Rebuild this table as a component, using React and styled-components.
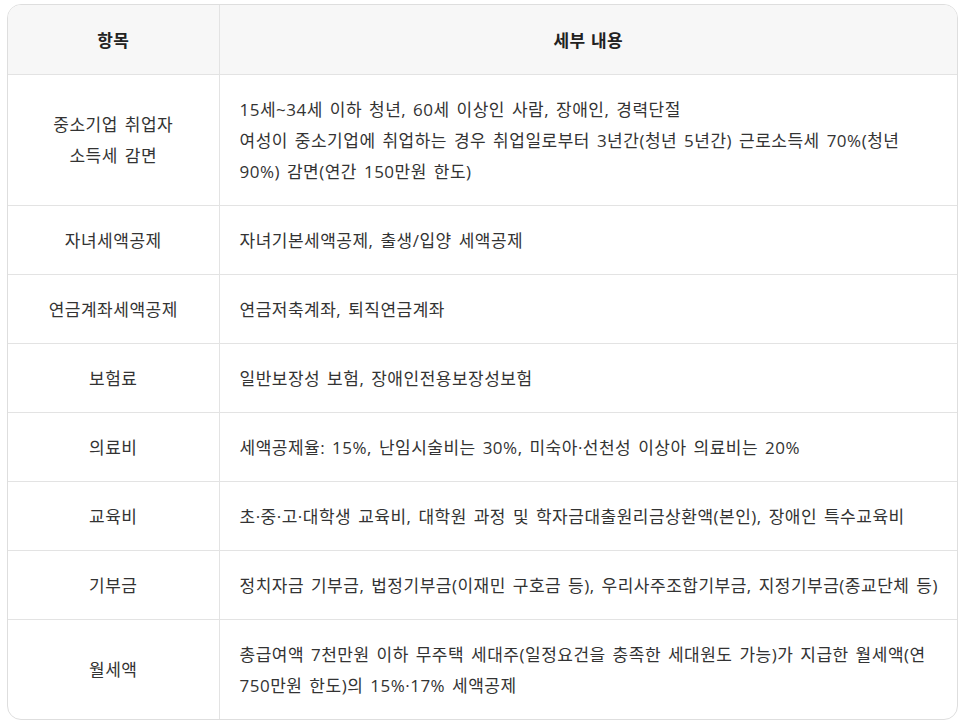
import styled, { createGlobalStyle } from "styled-components";

const GlobalStyle = createGlobalStyle`
    body {
        margin: 0;
        background: #FFFFFF;
        font-family: "Open Sans", "Noto Sans CJK KR", sans-serif;
    }
`;

const rows = [
    {
        item: ["중소기업 취업자", "소득세 감면"],
        detail: [
            "15세~34세 이하 청년, 60세 이상인 사람, 장애인, 경력단절",
            "여성이 중소기업에 취업하는 경우 취업일로부터 3년간(청년 5년간) 근로소득세 70%(청년",
            "90%) 감면(연간 150만원 한도)",
        ],
    },
    { item: ["자녀세액공제"], detail: ["자녀기본세액공제, 출생/입양 세액공제"] },
    { item: ["연금계좌세액공제"], detail: ["연금저축계좌, 퇴직연금계좌"] },
    { item: ["보험료"], detail: ["일반보장성 보험, 장애인전용보장성보험"] },
    { item: ["의료비"], detail: ["세액공제율: 15%, 난임시술비는 30%, 미숙아·선천성 이상아 의료비는 20%"] },
    { item: ["교육비"], detail: ["초·중·고·대학생 교육비, 대학원 과정 및 학자금대출원리금상환액(본인), 장애인 특수교육비"] },
    { item: ["기부금"], detail: ["정치자금 기부금, 법정기부금(이재민 구호금 등), 우리사주조합기부금, 지정기부금(종교단체 등)"] },
    {
        item: ["월세액"],
        detail: [
            "총급여액 7천만원 이하 무주택 세대주(일정요건을 충족한 세대원도 가능)가 지급한 월세액(연",
            "750만원 한도)의 15%·17% 세액공제",
        ],
    },
];

function App() {
    return (
        <>
            <GlobalStyle />
            <Wrapper>
                <Tabela>
                    <colgroup>
                        <col style={{ width: "211px" }} />
                        <col />
                    </colgroup>
                    <thead>
                        <tr>
                            <Th>항목</Th>
                            <Th>세부 내용</Th>
                        </tr>
                    </thead>
                    <tbody>
                        {rows.map((r, i) => (
                            <Linha key={i}>
                                <Td $center>
                                    {r.item.map((t, j) => (
                                        <Texto key={j}>{t}</Texto>
                                    ))}
                                </Td>
                                <Td>
                                    {r.detail.map((t, j) => (
                                        <Texto key={j}>{t}</Texto>
                                    ))}
                                </Td>
                            </Linha>
                        ))}
                    </tbody>
                </Tabela>
            </Wrapper>
        </>
    );
}

export default App;

const Wrapper = styled.div`
    margin: 4px 0 0 7px;
    width: 951px;
    border: 1px solid #DEDEDE;
    border-radius: 14px;
    overflow: hidden;
    box-sizing: border-box;
`

const Tabela = styled.table`
    width: 100%;
    border-collapse: collapse;
    table-layout: fixed;
`

const Th = styled.th`
    background-color: #F7F7F7;
    height: 69px;
    padding: 0;
    font-size: 17px;
    font-weight: 700;
    color: #222222;
    text-align: center;
    vertical-align: middle;
    letter-spacing: 0.3px;
    word-spacing: 1px;
    border-bottom: 1px solid #E3E3E3;
    & + & {
        border-left: 1px solid #E3E3E3;
    }
`

const Linha = styled.tr`
    & + & td {
        border-top: 1px solid #E3E3E3;
    }
`

const Td = styled.td`
    padding: 18.5px ${props => props.$center ? "0" : "20px"};
    text-align: ${props => props.$center ? "center" : "left"};
    vertical-align: middle;
    font-size: 17px;
    line-height: 31px;
    letter-spacing: 0.5px;
    word-spacing: 2px;
    color: #333333;
    & + & {
        border-left: 1px solid #E3E3E3;
    }
`

const Texto = styled.div`
    white-space: nowrap;
`
